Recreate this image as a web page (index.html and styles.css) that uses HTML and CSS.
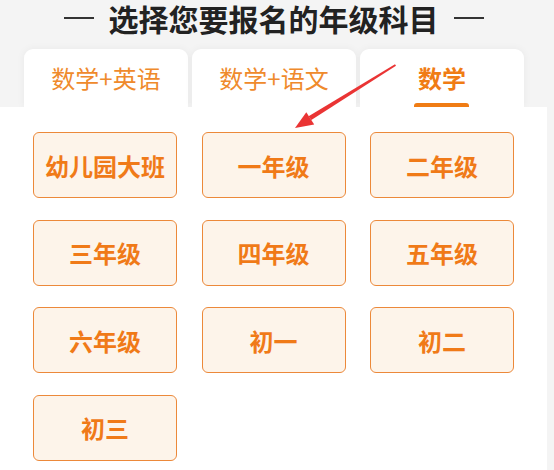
FILE: index.html
```html
<!DOCTYPE html>
<html lang="zh-CN">
<head>
<meta charset="utf-8">
<title>选择年级科目</title>
<link rel="stylesheet" href="styles.css">
</head>
<body>
<div class="page">
  <div class="title">
    <span class="dash"></span>
    <h1 class="title-text">选择您要报名的年级科目</h1>
    <span class="dash"></span>
  </div>
  <div class="tabs">
    <div class="tab">数学+英语</div>
    <div class="tab">数学+语文</div>
    <div class="tab active">数学<span class="underline"></span></div>
  </div>
  <div class="panel">
    <div class="grid">
      <div class="btn">幼儿园大班</div>
      <div class="btn">一年级</div>
      <div class="btn">二年级</div>
      <div class="btn">三年级</div>
      <div class="btn">四年级</div>
      <div class="btn">五年级</div>
      <div class="btn">六年级</div>
      <div class="btn">初一</div>
      <div class="btn">初二</div>
      <div class="btn">初三</div>
    </div>
  </div>
  <svg class="arrow" width="554" height="470" viewBox="0 0 554 470">
    <polygon points="395,64.2 396,65.8 311.3,120.1 308.6,116.2" fill="#ea3434"/>
    <polygon points="295,128 306.3,112.3 314.2,124.4" fill="#ea3434"/>
  </svg>
</div>
</body>
</html>
```

FILE: styles.css
```css
html, body {
  margin: 0;
  padding: 0;
  background: #f4f4f4;
}
.page {
  position: relative;
  width: 554px;
  height: 470px;
  overflow: hidden;
  background: #f4f4f4;
  font-family: "Noto Sans CJK SC", "Noto Sans", sans-serif;
}
.title {
  width: 547px;
  height: 32px;
  margin-top: 2px;
  display: flex;
  align-items: center;
  justify-content: center;
  gap: 15px;
}
.dash {
  width: 30px;
  height: 2px;
  background: #333;
}
.title-text {
  margin: 0;
  font-size: 30px;
  font-weight: 700;
  color: #222;
  line-height: 32px;
}
.tabs {
  display: flex;
  gap: 4px;
  padding-left: 24px;
  margin-top: 15px;
  height: 58px;
}
.tab {
  position: relative;
  width: 164px;
  height: 58px;
  background: #fff;
  border-radius: 9px 9px 0 0;
  box-shadow: 0 0 8px rgba(0, 0, 0, 0.05);
  display: flex;
  align-items: center;
  justify-content: center;
  padding-bottom: 2px;
  box-sizing: border-box;
  font-size: 24px;
  color: #ef8a2c;
  font-weight: 400;
}
.tab.active {
  color: #f07c14;
  font-weight: 700;
}
.underline {
  position: absolute;
  left: 54px;
  bottom: 0;
  width: 55px;
  height: 4px;
  background: #f07c14;
  border-radius: 3px 3px 0 0;
}
.panel {
  position: relative;
  width: 547px;
  height: 363px;
  background: #fff;
  padding: 25px 0 0 33px;
  box-sizing: border-box;
}
.grid {
  display: grid;
  grid-template-columns: repeat(3, 144px);
  grid-auto-rows: 66px;
  column-gap: 24.5px;
  row-gap: 21.5px;
}
.btn {
  border: 1.5px solid #ec893a;
  border-radius: 6px;
  background: #fdf4ea;
  display: flex;
  align-items: center;
  justify-content: center;
  font-size: 24px;
  font-weight: 700;
  color: #f07a18;
}
.arrow {
  position: absolute;
  left: 0;
  top: 0;
  pointer-events: none;
}
```
